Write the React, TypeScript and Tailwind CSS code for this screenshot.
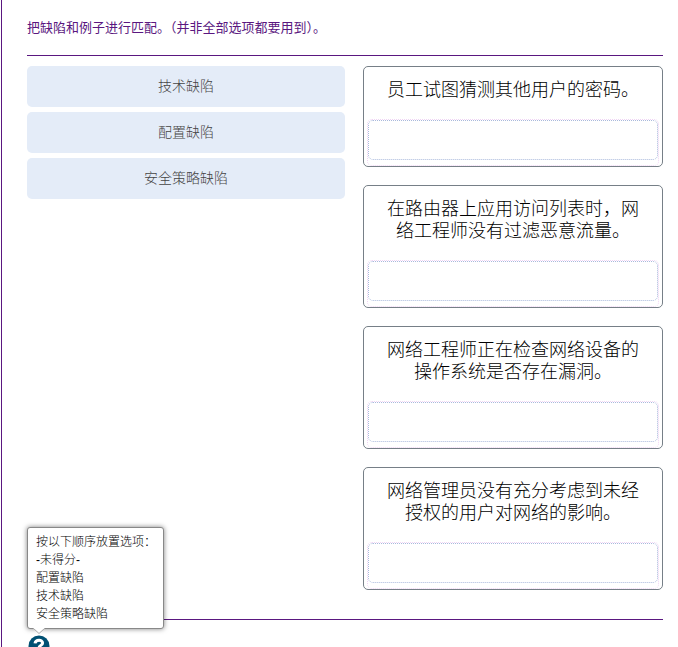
import React from "react";

const options = ["技术缺陷", "配置缺陷", "安全策略缺陷"];

const targets = [
  "员工试图猜测其他用户的密码。",
  "在路由器上应用访问列表时，网络工程师没有过滤恶意流量。",
  "网络工程师正在检查网络设备的操作系统是否存在漏洞。",
  "网络管理员没有充分考虑到未经授权的用户对网络的影响。",
];

const answers = ["-未得分-", "配置缺陷", "技术缺陷", "安全策略缺陷"];

export default function App() {
  return (
    <main className="ml-px h-screen overflow-hidden border-l border-[#5a1780] bg-white pt-4 pr-[15px] pl-[25px] font-['Liberation_Sans','Noto_Sans_CJK_SC',sans-serif] font-light">
      <h1 className="pb-4 text-[13px] leading-[23px] font-normal text-[#5a1780]">
        把缺陷和例子进行匹配。（并非全部选项都要用到）。
      </h1>
      <section className="grid grid-cols-[318fr_300fr] gap-[18px] border-y border-[#5a1780] pt-2.5 pb-[29px]">
        <div className="flex flex-col gap-[5px]">
          {options.map((option) => (
            <button
              key={option}
              type="button"
              className="h-[41px] w-full rounded-[5px] bg-[#e4ecf8] pb-0.5 text-sm text-[#444]"
            >
              {option}
            </button>
          ))}
        </div>
        <div className="flex flex-col gap-[18px]">
          {targets.map((target) => (
            <article
              key={target}
              className="rounded-[5px] border border-[#767f87] px-[3px] pt-3"
            >
              <p className="mb-[18px] px-4 text-center text-lg leading-[22px] text-black">
                {target}
              </p>
              <div className="rounded-[5px] border border-dotted border-[#f0d4f4] pb-[5px]">
                <div className="h-10 rounded-[5px] border border-dotted border-[#a9b9dc]" />
              </div>
            </article>
          ))}
        </div>
      </section>
      <aside className="relative pt-[15px]">
        <div
          role="tooltip"
          className="absolute -top-[93px] left-0 w-[137px] rounded-[3px] border border-[#888] bg-white px-2 py-[5px] text-xs leading-[18px] text-black shadow-[0_0_5px_rgba(0,0,0,0.5)]"
        >
          <p className="whitespace-nowrap">按以下顺序放置选项：</p>
          <ul>
            {answers.map((answer, index) => (
              <li key={index}>{answer}</li>
            ))}
          </ul>
          <svg
            className="absolute top-full left-[5px]"
            width="12"
            height="6"
            viewBox="0 0 12 6"
          >
            <path d="M0 0L6 5.5L12 0" fill="#fff" stroke="#aaa" />
            <path d="M1 0H11" stroke="#fff" />
          </svg>
        </div>
        <button type="button" aria-label="帮助" className="ml-px block">
          <svg width="22" height="22" viewBox="0 0 22 22">
            <circle cx="11" cy="11" r="10.5" fill="#005073" />
            <path
              d="M7 8.4C7.6 4.4 14.6 4.3 14.6 8C14.6 10.4 11 10.4 11 13M11 15V18"
              fill="none"
              stroke="#fff"
              strokeWidth="3"
            />
          </svg>
        </button>
      </aside>
    </main>
  );
}
